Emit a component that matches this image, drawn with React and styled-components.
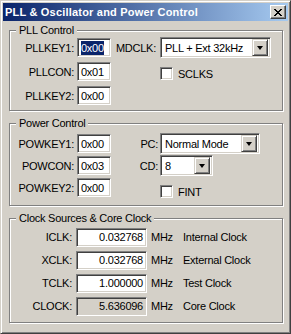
import React from "react";
import styled, { createGlobalStyle } from "styled-components";

const GlobalStyle = createGlobalStyle`
  html, body {
    margin: 0;
    padding: 0;
    background: #d4d0c8;
  }
  body {
    font-family: "Liberation Sans", Arial, sans-serif;
    font-size: 11px;
    letter-spacing: -0.25px;
    color: #000;
  }
`;

const Window = styled.div`
  width: 291px;
  height: 334px;
  box-sizing: border-box;
  background: #d4d0c8;
  border: 1px solid;
  border-color: #d4d0c8 #404040 #404040 #d4d0c8;
  box-shadow: inset 1px 1px 0 #fff, inset -1px -1px 0 #808080;
  padding: 2px;
  display: flex;
  flex-direction: column;
`;

const TitleBar = styled.div`
  height: 18px;
  flex: none;
  display: flex;
  align-items: center;
  padding: 0 2px 0 2px;
  background: linear-gradient(to right, #0a246a, #a6caf0);
`;

const Title = styled.div`
  flex: 1;
  color: #fff;
  font-weight: bold;
  font-size: 11px;
  letter-spacing: 0.2px;
  white-space: nowrap;
`;

const CloseButton = styled.div`
  width: 16px;
  height: 14px;
  box-sizing: border-box;
  background: #d4d0c8;
  border: 1px solid;
  border-color: #fff #404040 #404040 #fff;
  box-shadow: inset -1px -1px 0 #808080;
  display: flex;
  align-items: center;
  justify-content: center;
  padding-right: 1px;
`;

const Body = styled.div`
  display: flex;
  flex-direction: column;
  gap: 12px;
  padding: 9px 5px 0 6px;
`;

const Group = styled.div`
  position: relative;
  border: 1px solid #808080;
  box-shadow: 1px 1px 0 #fff, inset 1px 1px 0 #fff;
  padding: ${(p) => p.$pad};
`;

const Caption = styled.span`
  position: absolute;
  top: -7px;
  left: 6px;
  padding: 0 3px;
  line-height: 13px;
  background: #d4d0c8;
  white-space: nowrap;
`;

const Grid = styled.div`
  display: grid;
  grid-template-columns: ${(p) => p.$cols};
  grid-auto-rows: ${(p) => p.$row}px;
  row-gap: ${(p) => p.$gap}px;
  align-items: center;
`;

const Label = styled.div`
  text-align: ${(p) => p.$align || "right"};
  padding-right: ${(p) => p.$pr ?? 3}px;
  padding-left: ${(p) => p.$pl ?? 0}px;
  white-space: nowrap;
`;

const sunken = `
  border: 1px solid;
  border-color: #808080 #fff #fff #808080;
  box-shadow: inset 1px 1px 0 #404040, inset -1px -1px 0 #d4d0c8;
`;

const Field = styled.div`
  ${sunken}
  box-sizing: border-box;
  height: 19px;
  display: flex;
  align-items: center;
  justify-content: ${(p) => (p.$right ? "flex-end" : "flex-start")};
  padding: 0 3px;
  background: ${(p) => (p.$disabled ? "#d4d0c8" : "#fff")};
  white-space: nowrap;
`;

const Selected = styled.span`
  background: #0a246a;
  color: #fff;
  line-height: 14px;
`;

const Select = styled.div`
  ${sunken}
  box-sizing: border-box;
  width: ${(p) => p.$w}px;
  height: 21px;
  background: #fff;
  display: flex;
  align-items: center;
  padding: 2px;
`;

const SelectValue = styled.div`
  flex: 1;
  padding-left: 2px;
  white-space: nowrap;
  overflow: hidden;
`;

const ArrowButton = styled.div`
  width: 16px;
  height: 17px;
  box-sizing: border-box;
  background: #d4d0c8;
  border: 1px solid;
  border-color: #d4d0c8 #404040 #404040 #d4d0c8;
  box-shadow: inset 1px 1px 0 #fff, inset -1px -1px 0 #808080;
  display: flex;
  align-items: center;
  justify-content: center;

  &::after {
    content: "";
    border-left: 3.5px solid transparent;
    border-right: 3.5px solid transparent;
    border-top: 4px solid #000;
  }
`;

const CheckRow = styled.div`
  display: flex;
  align-items: center;
  gap: 5px;
  align-self: ${(p) => p.$self || "center"};
  margin-top: ${(p) => p.$mt || 0}px;
`;

const CheckBox = styled.div`
  ${sunken}
  box-sizing: border-box;
  width: 13px;
  height: 13px;
  background: #fff;
`;

const CloseIcon = () => (
  <svg width="8" height="7" viewBox="0 0 8 7" shapeRendering="crispEdges">
    <path
      d="M0 0h2v1h-2zM6 0h2v1h-2zM1 1h2v1h-2zM5 1h2v1h-2zM2 2h4v1h-4zM3 3h2v1h-2zM2 4h4v1h-4zM1 5h2v1h-2zM5 5h2v1h-2zM0 6h2v1h-2zM6 6h2v1h-2z"
      fill="#000"
    />
  </svg>
);

const Dropdown = ({ width, value }) => (
  <Select $w={width}>
    <SelectValue>{value}</SelectValue>
    <ArrowButton />
  </Select>
);

const Check = ({ label, ...rest }) => (
  <CheckRow {...rest}>
    <CheckBox />
    <span>{label}</span>
  </CheckRow>
);

const clocks = [
  { name: "ICLK:", value: "0.032768", desc: "Internal Clock" },
  { name: "XCLK:", value: "0.032768", desc: "External Clock" },
  { name: "TCLK:", value: "1.000000", desc: "Test Clock" },
  { name: "CLOCK:", value: "5.636096", desc: "Core Clock", disabled: true },
];

export default function App() {
  return (
    <>
      <GlobalStyle />
      <Window>
        <TitleBar>
          <Title>PLL &amp; Oscillator and Power Control</Title>
          <CloseButton>
            <CloseIcon />
          </CloseButton>
        </TitleBar>
        <Body>
          <Group $pad="6px 0 4px 0">
            <Caption>PLL Control</Caption>
            <Grid $cols="67px 34px 49px 111px" $row={21} $gap={3}>
              <Label>PLLKEY1:</Label>
              <Field>
                <Selected>0x00</Selected>
              </Field>
              <Label $pr={4}>MDCLK:</Label>
              <Dropdown width={111} value="PLL + Ext 32kHz" />

              <Label>PLLCON:</Label>
              <Field>0x01</Field>
              <span />
              <Check label="SCLKS" $mt={4} />

              <Label>PLLKEY2:</Label>
              <Field>0x00</Field>
            </Grid>
          </Group>

          <Group $pad="9px 0 7px 0">
            <Caption>Power Control</Caption>
            <Grid $cols="67px 34px 49px auto" $row={21} $gap={1}>
              <Label>POWKEY1:</Label>
              <Field>0x00</Field>
              <Label $pr={2}>PC:</Label>
              <Dropdown width={100} value="Normal Mode" />

              <Label>POWCON:</Label>
              <Field>0x03</Field>
              <Label $pr={2}>CD:</Label>
              <Dropdown width={53} value="8" />

              <Label>POWKEY2:</Label>
              <Field>0x00</Field>
              <span />
              <Check label="FINT" $self="end" />
            </Grid>
          </Group>

          <Group $pad="8px 0 6px 0">
            <Caption>Clock Sources &amp; Core Clock</Caption>
            <Grid $cols="66px 71px 36px auto" $row={20} $gap={3}>
              {clocks.map((c) => (
                <React.Fragment key={c.name}>
                  <Label $pr={4}>{c.name}</Label>
                  <Field $right $disabled={c.disabled}>
                    {c.value}
                  </Field>
                  <Label $align="left" $pr={0} $pl={4}>
                    MHz
                  </Label>
                  <Label $align="left" $pr={0}>
                    {c.desc}
                  </Label>
                </React.Fragment>
              ))}
            </Grid>
          </Group>
        </Body>
      </Window>
    </>
  );
}
